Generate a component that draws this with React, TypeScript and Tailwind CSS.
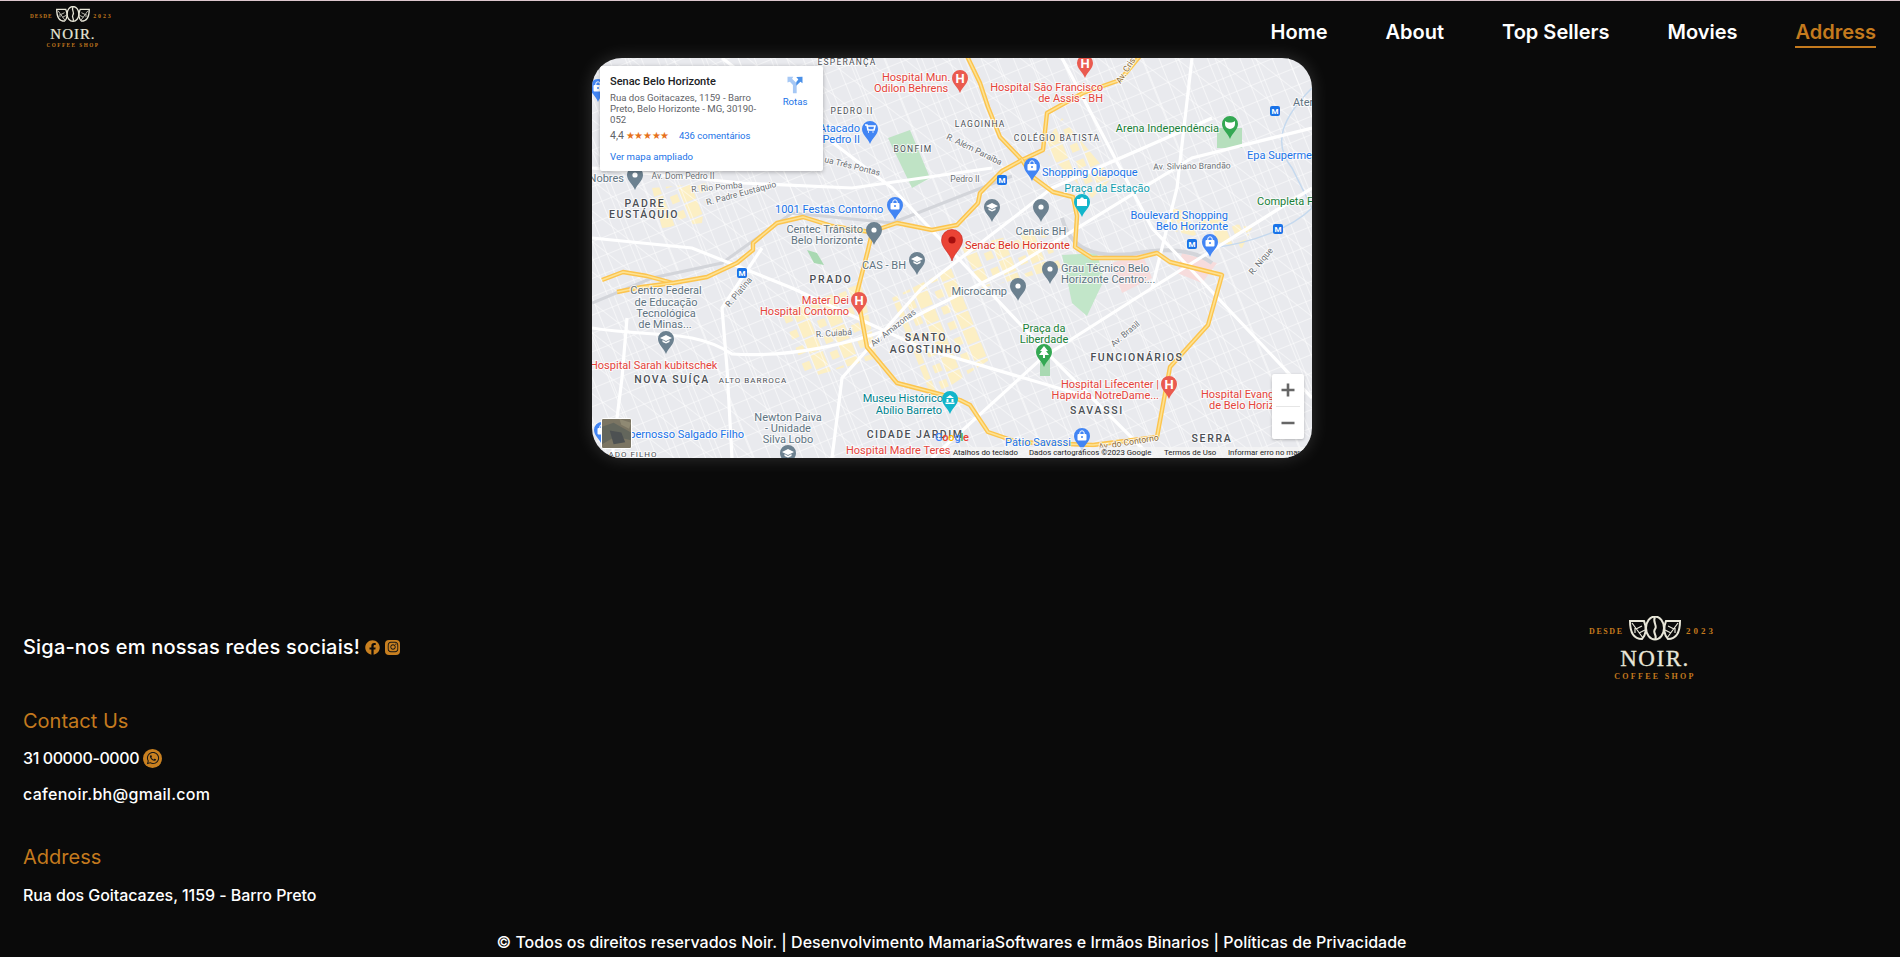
import { FaFacebook, FaInstagram, FaWhatsapp } from 'react-icons/fa'

const poppins = "font-['Inter','Liberation_Sans',sans-serif]"

const navItems = ['Home', 'About', 'Top Sellers', 'Movies', 'Address']

type Label = { t: string; x: number; y: number; c: string; a?: 'start' | 'middle' | 'end'; s?: number; w?: number; ls?: number; r?: number }

const RED = '#e5443a'
const BLUE = '#1a73e8'
const GRAY = '#5f7482'
const GREEN = '#188038'
const TEAL = '#129eaf'
const AREA = '#4b4f55'
const STREET = '#6b7075'

const labels: Label[] = [
  { t: 'ESPERANÇA', x: 255, y: 7, c: AREA, a: 'middle', s: 8.5, ls: 1.2 },
  { t: 'Hospital Mun.', x: 290, y: 23, c: RED },
  { t: 'Odilon Behrens', x: 282, y: 34, c: RED },
  { t: 'PEDRO II', x: 260, y: 56, c: AREA, a: 'middle', s: 8.5, ls: 1.2 },
  { t: 'Atacado', x: 268, y: 74, c: BLUE, a: 'end' },
  { t: 'Pedro II', x: 268, y: 85, c: BLUE, a: 'end' },
  { t: 'BONFIM', x: 321, y: 94, c: AREA, a: 'middle', s: 8.5, ls: 1.2 },
  { t: 'ua Três Pontas', x: 232, y: 104, c: STREET, s: 8.6, r: 14 },
  { t: 'Av. Dom Pedro II', x: 91, y: 121, c: STREET, a: 'middle', s: 8.6 },
  { t: 'R. Rio Pomba', x: 125, y: 132, c: STREET, a: 'middle', s: 8.6, r: -5 },
  { t: 'R. Padre Eustáquio', x: 150, y: 138, c: STREET, a: 'middle', s: 8.6, r: -15 },
  { t: 'Nobres', x: 32, y: 124, c: GRAY, a: 'end' },
  { t: 'PADRE', x: 53, y: 149, c: AREA, a: 'middle', s: 10.5, w: 500, ls: 1.7 },
  { t: 'EUSTÁQUIO', x: 52, y: 160, c: AREA, a: 'middle', s: 10.5, w: 500, ls: 1.5 },
  { t: '1001 Festas Contorno', x: 183, y: 155, c: BLUE },
  { t: 'Centec Trânsito', x: 271, y: 175, c: GRAY, a: 'end' },
  { t: 'Belo Horizonte', x: 271, y: 186, c: GRAY, a: 'end' },
  { t: 'Hospital São Francisco', x: 511, y: 33, c: RED, a: 'end' },
  { t: 'de Assis - BH', x: 511, y: 44, c: RED, a: 'end' },
  { t: 'Av. Cris', x: 536, y: 14, c: '#8a6a3a', a: 'middle', s: 8.6, r: -58 },
  { t: 'LAGOINHA', x: 388, y: 69, c: AREA, a: 'middle', s: 8.5, ls: 1.1 },
  { t: 'COLÉGIO BATISTA', x: 465, y: 83, c: AREA, a: 'middle', s: 8.5, ls: 1.1 },
  { t: 'R. Além Paraíba', x: 381, y: 94, c: STREET, a: 'middle', s: 8.6, r: 26 },
  { t: 'Pedro II', x: 373, y: 124, c: STREET, a: 'middle', s: 8.6 },
  { t: 'Shopping Oiapoque', x: 450, y: 118, c: BLUE },
  { t: 'Praça da Estação', x: 515, y: 134, c: TEAL, a: 'middle' },
  { t: 'Cenaic BH', x: 449, y: 177, c: GRAY, a: 'middle' },
  { t: 'Senac Belo Horizonte', x: 373, y: 191, c: '#d93025' },
  { t: 'Arena Independência', x: 627, y: 74, c: GREEN, a: 'end' },
  { t: 'Ater', x: 701, y: 48, c: GRAY },
  { t: 'Epa Superme', x: 655, y: 101, c: BLUE },
  { t: 'Av. Silviano Brandão', x: 600, y: 111, c: STREET, a: 'middle', s: 8.6, r: -1 },
  { t: 'Completa F', x: 665, y: 147, c: GREEN },
  { t: 'Boulevard Shopping', x: 636, y: 161, c: BLUE, a: 'end' },
  { t: 'Belo Horizonte', x: 636, y: 172, c: BLUE, a: 'end' },
  { t: 'R. Platina', x: 149, y: 236, c: STREET, a: 'middle', s: 8.6, r: -50 },
  { t: 'PRADO', x: 239, y: 225, c: AREA, a: 'middle', s: 10.5, w: 500, ls: 1.7 },
  { t: 'CAS - BH', x: 314, y: 211, c: GRAY, a: 'end' },
  { t: 'Mater Dei', x: 257, y: 246, c: RED, a: 'end' },
  { t: 'Hospital Contorno', x: 257, y: 257, c: RED, a: 'end' },
  { t: 'Centro Federal', x: 74, y: 236, c: GRAY, a: 'middle' },
  { t: 'de Educação', x: 74, y: 248, c: GRAY, a: 'middle' },
  { t: 'Tecnológica', x: 74, y: 259, c: GRAY, a: 'middle' },
  { t: 'de Minas...', x: 73, y: 270, c: GRAY, a: 'middle' },
  { t: 'R. Cuiabá', x: 242, y: 278, c: STREET, a: 'middle', s: 8.6, r: -4 },
  { t: 'Av. Amazonas', x: 303, y: 272, c: STREET, a: 'middle', s: 8.6, r: -38 },
  { t: 'SANTO', x: 334, y: 283, c: AREA, a: 'middle', s: 10.5, w: 500, ls: 1.7 },
  { t: 'AGOSTINHO', x: 334, y: 295, c: AREA, a: 'middle', s: 10.5, w: 500, ls: 1.5 },
  { t: 'Hospital Sarah kubitschek', x: -2, y: 311, c: RED },
  { t: 'NOVA SUÍÇA', x: 80, y: 325, c: AREA, a: 'middle', s: 10.5, w: 500, ls: 1.5 },
  { t: 'ALTO BARROCA', x: 161, y: 325, c: AREA, a: 'middle', s: 8, ls: 1 },
  { t: 'Museu Histórico', x: 351, y: 344, c: '#00838f', a: 'end' },
  { t: 'Abílio Barreto', x: 350, y: 356, c: '#00838f', a: 'end' },
  { t: 'Newton Paiva', x: 196, y: 363, c: GRAY, a: 'middle' },
  { t: '- Unidade', x: 196, y: 374, c: GRAY, a: 'middle' },
  { t: 'Silva Lobo', x: 196, y: 385, c: GRAY, a: 'middle' },
  { t: 'CIDADE JARDIM', x: 323, y: 380, c: AREA, a: 'middle', s: 10.5, w: 500, ls: 1.5 },
  { t: 'Hospital Madre Teres', x: 254, y: 396, c: RED },
  { t: 'Supernosso Salgado Filho', x: 152, y: 380, c: BLUE, a: 'end' },
  { t: 'ADO FILHO', x: 41, y: 399, c: AREA, a: 'middle', s: 8, ls: 1 },
  { t: 'Grau Técnico Belo', x: 469, y: 214, c: GRAY },
  { t: 'Horizonte Centro:...', x: 469, y: 225, c: GRAY },
  { t: 'Microcamp', x: 415, y: 237, c: GRAY, a: 'end' },
  { t: 'Praça da', x: 452, y: 274, c: GREEN, a: 'middle' },
  { t: 'Liberdade', x: 452, y: 285, c: GREEN, a: 'middle' },
  { t: 'Av. Brasil', x: 535, y: 278, c: STREET, a: 'middle', s: 8.6, r: -40 },
  { t: 'R. Nique', x: 671, y: 205, c: STREET, a: 'middle', s: 8.6, r: -50 },
  { t: 'FUNCIONÁRIOS', x: 545, y: 303, c: AREA, a: 'middle', s: 10.5, w: 500, ls: 1.5 },
  { t: 'Hospital Lifecenter |', x: 567, y: 330, c: RED, a: 'end' },
  { t: 'Hapvida NotreDame...', x: 567, y: 341, c: RED, a: 'end' },
  { t: 'Hospital Evang', x: 609, y: 340, c: RED },
  { t: 'de Belo Horiz', x: 617, y: 351, c: RED },
  { t: 'SAVASSI', x: 505, y: 356, c: AREA, a: 'middle', s: 10.5, w: 500, ls: 1.7 },
  { t: 'Pátio Savassi', x: 413, y: 388, c: BLUE },
  { t: 'SERRA', x: 620, y: 384, c: AREA, a: 'middle', s: 10.5, w: 500, ls: 1.7 },
  { t: 'Av. do Contorno', x: 537, y: 387, c: '#8a6a3a', a: 'middle', s: 8.6, r: -9 },
]

type PinData = { x: number; y: number; c: string; k: 'h' | 'bag' | 'dot' | 'cap' | 'cam' | 'cart' | 'tree' | 'ball' | 'museum' }

// head centre of every marker on the map
const pins: PinData[] = [
  { x: 278, y: 71, c: '#4285f4', k: 'cart' },
  { x: 43, y: 117, c: '#6c8190', k: 'dot' },
  { x: 303, y: 147, c: '#4285f4', k: 'bag' },
  { x: 282, y: 172, c: '#6c8190', k: 'dot' },
  { x: 6, y: 29, c: '#4285f4', k: 'bag' },
  { x: 368, y: 20, c: '#ea5a4f', k: 'h' },
  { x: 493, y: 5, c: '#ea5a4f', k: 'h' },
  { x: 440, y: 108, c: '#4285f4', k: 'bag' },
  { x: 490, y: 144, c: '#12b5cb', k: 'cam' },
  { x: 400, y: 149, c: '#6c8190', k: 'cap' },
  { x: 449, y: 149, c: '#6c8190', k: 'dot' },
  { x: 638, y: 66, c: '#34a853', k: 'ball' },
  { x: 618, y: 184, c: '#4285f4', k: 'bag' },
  { x: 325, y: 202, c: '#6c8190', k: 'cap' },
  { x: 267, y: 242, c: '#ea5a4f', k: 'h' },
  { x: 74, y: 281, c: '#6c8190', k: 'cap' },
  { x: 358, y: 341, c: '#12b5cb', k: 'museum' },
  { x: 196, y: 395, c: '#6c8190', k: 'cap' },
  { x: 10, y: 372, c: '#4285f4', k: 'bag' },
  { x: 458, y: 211, c: '#6c8190', k: 'dot' },
  { x: 426, y: 228, c: '#6c8190', k: 'dot' },
  { x: 452, y: 294, c: '#34a853', k: 'tree' },
  { x: 577, y: 326, c: '#ea5a4f', k: 'h' },
  { x: 490, y: 378, c: '#4285f4', k: 'bag' },
]

const metros = [
  [410, 122],
  [683, 53],
  [686, 171],
  [600, 186],
  [150, 215],
]

const arterials = [
  'M375 -2 L388 25 L396 49 L408 79 L430 102 L451 92 L455 55 L491 35 L528 22 L548 -2',
  'M430 102 L410 113 L388 135 L386 145 L365 167 L340 172 L305 165 L278 174 L240 168 L211 159 L185 165 L161 185 L161 192 L145 205 L115 219 L81 225 L55 218 L31 214 L10 222',
  'M81 225 L50 229 L25 234',
  'M280 175 L276 192 L265 235 L275 289 L305 325 L351 337 L368 342 L378 347 L396 374 L425 384 L501 387 L565 379 L578 309 L616 267 L630 217 L578 204 L565 195 L545 200 L500 200 L483 189 L485 158 L481 139 L461 134 L441 119 L430 102',
]

const whiteRoads = [
  'M0 270 C60 280 100 270 140 296 C200 300 260 285 300 270 L420 210 L600 100 L720 70',
  'M130 0 L300 130 L460 300 L560 400',
  'M470 0 L560 170 L720 340',
  'M240 400 L250 320 L330 230 L460 130 L620 60',
  'M0 110 L150 125 L260 130 L400 110',
  'M340 400 L450 300 L560 230 L720 130',
  'M140 400 L135 310 L130 250 L170 190',
  'M20 400 L30 320 L35 260',
  'M600 0 L585 130 L560 230',
  'M0 180 L100 190 L200 230 L330 290 L500 340',
]

const beige = [
  'M190 255 L270 225 L285 300 L215 320 Z',
  'M300 240 L360 210 L400 300 L340 340 Z',
  'M60 130 L115 125 L110 165 L70 170 Z',
  'M135 10 L170 60 L150 80 L120 30 Z',
  'M470 60 L520 120 L500 140 L450 90 Z',
  'M580 150 L660 170 L650 190 L570 170 Z',
  'M370 190 L450 170 L470 210 L390 230 Z',
]

function PinGlyph({ k }: { k: PinData['k'] }) {
  switch (k) {
    case 'h':
      return <text x="0" y="4.5" textAnchor="middle" fontSize="13" fontWeight="700" fill="#fff" className="font-['Roboto',sans-serif]">H</text>
    case 'bag':
      return (
        <g>
          <rect x="-4.5" y="-2" width="9" height="6.5" rx="1" fill="#fff" />
          <path d="M-2.2 -2 V-3 A2.2 2.2 0 0 1 2.2 -3 V-2" fill="none" stroke="#fff" strokeWidth="1" />
          <circle cx="0" cy="1" r="1" fill="#4285f4" />
        </g>
      )
    case 'dot':
      return <circle r="2.6" fill="#fff" />
    case 'cap':
      return <path d="M0 -4 L6 -1 L0 2 L-6 -1 Z M-3.5 1 V3 L0 4.5 L3.5 3 V1 L0 3 Z" fill="#fff" />
    case 'cam':
      return <path d="M-5 -3 H-2 L-1 -4.5 H1 L2 -3 H5 V4 H-5 Z" fill="#fff" />
    case 'cart':
      return <path d="M-5 -4 H-3 L-2 1 H4 L5 -3 H-2.5 M-2 3 H-1 M2.5 3 H3.5" fill="none" stroke="#fff" strokeWidth="1.6" />
    case 'tree':
      return <path d="M0 -6 L4 -1 H2 L5 3 H1 V6 H-1 V3 H-5 L-2 -1 H-4 Z" fill="#fff" />
    case 'ball':
      return <path d="M-5 -3 C-2 -1 2 -1 5 -3 V0 A5 5 0 0 1 -5 0 Z" fill="#fff" />
    case 'museum':
      return <path d="M-4 -1 L0 -4 L4 -1 Z M-3.5 0 H-1.5 V3 H-3.5 Z M1.5 0 H3.5 V3 H1.5 Z M-4.5 3.5 H4.5 V5 H-4.5 Z" fill="#fff" />
  }
}

function MapDrawing() {
  return (
    <svg viewBox="0 0 720 400" className="block w-full h-full font-['Roboto',sans-serif]">
      <defs>
        <pattern id="gridA" width="15" height="17" patternUnits="userSpaceOnUse" patternTransform="rotate(-22)">
          <path d="M0 0 H15 M0 0 V17" stroke="#fff" strokeWidth="1.1" fill="none" />
        </pattern>
        <pattern id="gridB" width="24" height="24" patternUnits="userSpaceOnUse" patternTransform="rotate(38)">
          <path d="M0 0 H24" stroke="#fff" strokeWidth="1" fill="none" />
        </pattern>
        <pattern id="gridC" width="34" height="34" patternUnits="userSpaceOnUse" patternTransform="rotate(68)">
          <path d="M0 0 H34" stroke="#fff" strokeWidth="1" fill="none" />
        </pattern>
        <pattern id="blocks" width="30" height="17" patternUnits="userSpaceOnUse" patternTransform="rotate(-22)">
          <rect x="1" y="1" width="13" height="15" fill="#fcefc4" />
          <rect x="20" y="5" width="8" height="8" fill="#fcefc4" />
        </pattern>
      </defs>
      <rect width="720" height="400" fill="#e9eaee" />
      {beige.map((d) => (
        <path key={d} d={d} fill="url(#blocks)" />
      ))}
      <rect width="720" height="400" fill="url(#gridA)" />
      <rect width="720" height="400" fill="url(#gridB)" />
      <rect width="720" height="400" fill="url(#gridC)" />

      {/* parks */}
      <path d="M296 80 L318 72 L338 120 L320 130 Z" fill="#bfe3c5" />
      <path d="M470 197 L505 195 L512 222 L495 258 L480 245 Z" fill="#c2e6c9" />
      <path d="M625 70 H650 V90 H625 Z" fill="#b6dfbd" />
      <path d="M448 300 H458 V318 H448 Z" fill="#a9d9b2" />
      <path d="M520 205 L550 195 L560 220 L530 235 Z" fill="#f7dcdc" />
      <path d="M590 195 L625 205 L610 225 L585 215 Z" fill="#f7dcdc" />
      <path d="M215 192 L225 195 L232 207 L222 205 Z" fill="#a9d9b2" />

      {/* gray highway and river */}
      <path d="M470 160 C478 190 500 200 540 196 C570 190 600 190 620 205" fill="none" stroke="#d3d5da" strokeWidth="4" />
      <path d="M0 245 L60 220 L130 205 L200 155 L300 165 L420 118" fill="none" stroke="#d3d5da" strokeWidth="3" />
      <path d="M720 30 C690 60 680 85 700 110 L720 150 C700 170 660 185 620 190" fill="none" stroke="#c5d9ee" strokeWidth="1.5" />

      {whiteRoads.map((d) => (
        <path key={d} d={d} fill="none" stroke="#fff" strokeWidth="3.2" />
      ))}
      {arterials.map((d) => (
        <g key={d}>
          <path d={d} fill="none" stroke="#fcc44e" strokeWidth="4.4" strokeLinejoin="round" />
          <path d={d} fill="none" stroke="#fde293" strokeWidth="1.6" strokeLinejoin="round" />
        </g>
      ))}

      {labels.map((l) => (
        <text
          key={l.t + l.x}
          x={l.x}
          y={l.y}
          textAnchor={l.a ?? 'start'}
          fontSize={l.s ?? 11}
          fontWeight={l.w ?? 400}
          letterSpacing={l.ls ?? 0}
          fill={l.c}
          stroke="#fff"
          strokeOpacity="0.75"
          strokeWidth="2"
          transform={l.r ? `rotate(${l.r} ${l.x} ${l.y})` : undefined}
          className="[paint-order:stroke]"
        >
          {l.t}
        </text>
      ))}

      {pins.map((p) => (
        <g key={`${p.x}-${p.y}`} transform={`translate(${p.x} ${p.y})`}>
          <path d="M0 15 C-2 9 -8 6 -8 0 A8 8 0 1 1 8 0 C8 6 2 9 0 15 Z" fill={p.c} />
          <PinGlyph k={p.k} />
        </g>
      ))}

      {metros.map(([x, y]) => (
        <g key={`${x}-${y}`}>
          <rect x={x - 5} y={y - 5} width="10" height="10" rx="2" fill="#1a73e8" />
          <text x={x} y={y + 3} textAnchor="middle" fontSize="8" fontWeight="700" fill="#fff">M</text>
        </g>
      ))}

      {/* selected place */}
      <g transform="translate(360 182)">
        <path d="M0 21 C-2 13 -10.5 8 -10.5 0 A10.5 10.5 0 1 1 10.5 0 C10.5 8 2 13 0 21 Z" fill="#ea4335" stroke="#c5221f" strokeWidth="0.6" />
        <circle r="3.6" fill="#a50e0e" />
      </g>

      {/* google mark */}
      <text x="343" y="383" fontSize="11" fontWeight="500" letterSpacing="-0.2">
        <tspan fill="#4285f4">G</tspan>
        <tspan fill="#ea4335">o</tspan>
        <tspan fill="#fbbc05">o</tspan>
        <tspan fill="#4285f4">g</tspan>
        <tspan fill="#34a853">l</tspan>
        <tspan fill="#ea4335">e</tspan>
      </text>
    </svg>
  )
}

function LogoMark({ className }: { className: string }) {
  return (
    <svg viewBox="0 0 129 64" className={className}>
      <g fill="none" stroke="#e8e6d8" strokeWidth="2">
        <ellipse cx="66" cy="12" rx="9" ry="11.5" />
        <path d="M66 1 C63 6 69 10 66 13 C63 17 69 20 66 23" />
        <path d="M41 5 H55 C58 12 57 19 53 23 C47 23 41 19 41 5 Z" />
        <path d="M43 7 L54 22 M47 13 L53 10 M46 12 L46 17 M50 17 L56 14" strokeWidth="1.2" />
        <path d="M91 5 H77 C74 12 75 19 79 23 C85 23 91 19 91 5 Z" />
        <path d="M89 7 L78 22 M85 13 L79 10 M86 12 L86 17 M82 17 L76 14" strokeWidth="1.2" />
      </g>
      <g className="font-['Liberation_Serif',serif]">
        <text x="0" y="18" fontSize="8" fontWeight="700" letterSpacing="1.6" fill="#c47a1e">DESDE</text>
        <text x="97" y="18" fontSize="9" fontWeight="700" letterSpacing="3" fill="#c47a1e">2023</text>
        <text x="66" y="50" textAnchor="middle" fontSize="23" letterSpacing="1.5" fill="#e8e6d8" stroke="#e8e6d8" strokeWidth="0.3">NOIR.</text>
        <text x="66" y="63" textAnchor="middle" fontSize="8" fontWeight="700" letterSpacing="2.3" fill="#c47a1e">COFFEE SHOP</text>
      </g>
    </svg>
  )
}

function MapEmbed() {
  return (
    <div className="relative w-[720px] h-[400px] rounded-[30px] overflow-hidden shadow-[0_0_18px_rgba(255,255,255,0.16)] font-['Roboto',sans-serif]">
      <MapDrawing />

      {/* place card */}
      <div className="absolute left-[8px] top-[8px] w-[223px] h-[105px] bg-white rounded-[2px] shadow-[0_1px_4px_rgba(0,0,0,0.3)] pl-[10px] pr-[8px] pt-[9px] flex">
        <div className="w-[165px]">
          <p className="text-[11px] leading-[13px] font-medium text-[#202124]">Senac Belo Horizonte</p>
          <p className="mt-[4px] w-[150px] text-[9.6px] leading-[11px] text-[#5f6368]">Rua dos Goitacazes, 1159 - Barro Preto, Belo Horizonte - MG, 30190-052</p>
          <div className="mt-[5px] flex items-center h-[12px]">
            <span className="text-[10.5px] text-[#5f6368]">4,4</span>
            <span className="ml-[2px] text-[9.5px] tracking-[-0.4px] leading-none text-[#e7711b]">★★★★★</span>
            <span className="ml-[10px] text-[9.5px] text-[#1a73e8]">436 comentários</span>
          </div>
          <p className="mt-[9px] text-[9.6px] leading-[11px] text-[#1a73e8]">Ver mapa ampliado</p>
        </div>
        <div className="ml-[3px] w-[34px] flex flex-col items-center">
          <svg viewBox="0 0 24 24" className="w-[20px] h-[20px]">
            <path d="M3 2 L10 2 L8.5 4.5 L14 10 V22 H9.5 V12 L5.8 8 L3 9 Z" fill="#a6c8f5" />
            <path d="M21 2 L21 10 L18.5 8 L13.5 13 V8.5 L16 5.5 L13.5 2.5 Z" fill="#4a90e8" />
          </svg>
          <span className="mt-[1px] text-[9.6px] leading-[11px] text-[#1a73e8]">Rotas</span>
        </div>
      </div>

      {/* satellite thumbnail */}
      <div className="absolute left-[9px] top-[360px] w-[31px] h-[31px] border border-white rounded-[2px] bg-[#7b7563] overflow-hidden">
        <svg viewBox="0 0 30 30" className="w-full h-full">
          <path d="M0 8 L12 4 L30 14 L30 22 L14 18 L0 26 Z" fill="#63665c" />
          <path d="M8 12 L20 14 L24 24 L12 26 Z" fill="#4d5152" />
          <path d="M18 0 L30 4 L28 10 L20 6 Z" fill="#8f8973" />
        </svg>
      </div>

      {/* zoom */}
      <div className="absolute left-[680px] top-[316px] w-[32px] h-[65px] bg-white rounded-[2px] flex flex-col items-center shadow-[0_1px_3px_rgba(0,0,0,0.25)]">
        <svg viewBox="0 0 16 16" className="w-[16px] h-[16px] mt-[8px]">
          <path d="M8 1.5 V14.5 M1.5 8 H14.5" stroke="#666" strokeWidth="2.6" />
        </svg>
        <div className="w-[24px] h-px bg-[#e6e6e6] mt-[8px]" />
        <svg viewBox="0 0 16 16" className="w-[16px] h-[16px] mt-[8px]">
          <path d="M1.5 8 H14.5" stroke="#666" strokeWidth="2.6" />
        </svg>
      </div>

      {/* attribution */}
      <div className="absolute left-[359px] right-0 top-[389px] h-[11px] bg-[rgba(245,245,245,0.7)] flex items-center text-[7.8px] leading-none text-[#222] whitespace-nowrap">
        <span className="ml-[2px] w-[76px]">Atalhos do teclado</span>
        <span className="w-[135px]">Dados cartográficos ©2023 Google</span>
        <span className="w-[64px]">Termos de Uso</span>
        <span>Informar erro no mapa</span>
      </div>
    </div>
  )
}

export default function App() {
  return (
    <div className={`min-h-screen h-[957px] overflow-hidden bg-[#0a0a0a] text-white ${poppins}`}>
      <div className="h-px bg-[#dcc6cd]" />

      {/* Navbar */}
      <header className="flex justify-between h-[57px]">
        <LogoMark className="ml-[30px] mt-[5px] w-[84px] h-[42px]" />
        <nav className="flex gap-[58px] pr-[24px] pt-[19px]">
          {navItems.map((item) => (
            <a
              key={item}
              className={
                item === 'Address'
                  ? 'h-[28px] border-b-2 border-[#c47a1e] text-[20px] leading-[24px] font-semibold text-[#c47a1e]'
                  : 'h-[28px] text-[20px] leading-[24px] font-semibold text-white'
              }
            >
              {item}
            </a>
          ))}
        </nav>
      </header>

      {/* Map */}
      <section className="flex justify-center pl-[4px]">
        <MapEmbed />
      </section>

      {/* Footer */}
      <footer className="mt-[158px] pl-[23px] pr-[182px] flex justify-between">
        <div>
          <div className="h-[30px] mt-[16px] flex items-center">
            <span className="text-[20px] font-medium tracking-[0.18px]">Siga-nos em nossas redes sociais!</span>
            <FaFacebook className="ml-[5px] w-[15px] h-[15px] text-[#c98020]" />
            <span className="ml-[5px] w-[15px] h-[15px] rounded-[4px] bg-[#c98020] flex items-center justify-center">
              <FaInstagram className="w-[12px] h-[12px] text-[#161616]" />
            </span>
          </div>

          <h3 className="mt-[45px] h-[28px] text-[20px] leading-[28px] text-[#c47a1e]">Contact Us</h3>
          <div className="mt-[11px] h-[24px] flex items-center">
            <span className="text-[16px] font-medium tracking-[-0.4px]">31 00000-0000</span>
            <span className="ml-[4px] w-[19px] h-[19px] rounded-full bg-[#c98020] flex items-center justify-center">
              <FaWhatsapp className="w-[14px] h-[14px] text-[#161616]" />
            </span>
          </div>
          <p className="mt-[12px] h-[24px] text-[16px] leading-[24px] font-medium tracking-[0.28px]">cafenoir.bh@gmail.com</p>

          <h3 className="mt-[37px] h-[28px] text-[20px] leading-[28px] text-[#c47a1e]">Address</h3>
          <p className="mt-[12px] h-[24px] text-[16px] leading-[24px] font-medium tracking-[-0.06px]">Rua dos Goitacazes, 1159 - Barro Preto</p>
        </div>
        <LogoMark className="w-[129px] h-[64px]" />
      </footer>

      <p className="mt-[23px] pl-[3px] text-center text-[16px] leading-[24px] font-medium whitespace-nowrap tracking-[0.02px]">
        © Todos os direitos reservados Noir. | Desenvolvimento MamariaSoftwares e Irmãos Binarios | Políticas de Privacidade
      </p>
    </div>
  )
}
